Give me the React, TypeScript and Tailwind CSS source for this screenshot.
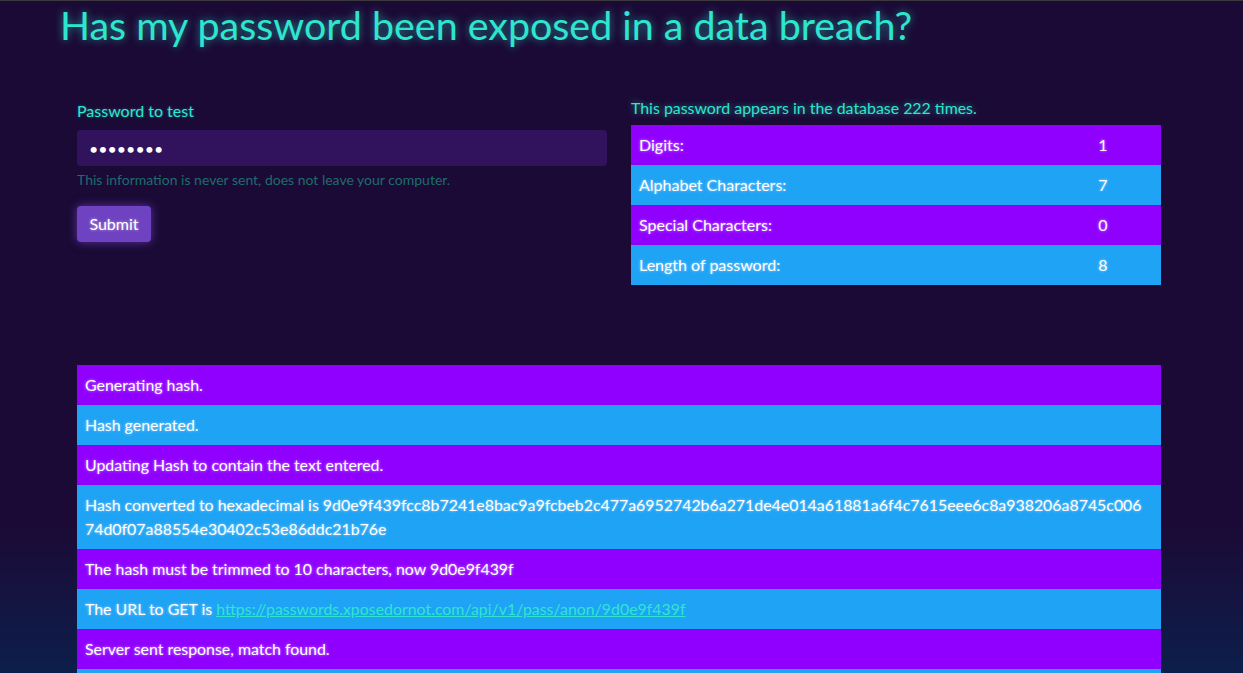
import React from "react";

const stats = [
  ["Digits:", "1"],
  ["Alphabet Characters:", "7"],
  ["Special Characters:", "0"],
  ["Length of password:", "8"],
];

const glowWhite = "[text-shadow:0_0_3px_rgba(255,255,255,0.6)]";

export default function App() {
  return (
    <div
      className="h-[673px] overflow-hidden border-t border-[#3a3a3a] bg-[linear-gradient(to_bottom,#1b0a36_0%,#1b0a36_78%,#0d1e4b_100%)] text-white"
      style={{ fontFamily: "Lato, 'Open Sans', sans-serif" }}
    >
      <div className="ml-[60px] w-[1118px]">
        <h1 className="text-[39.4px] leading-[48px] text-[#2ee6cf] [text-shadow:0_0_8px_rgba(46,230,207,0.6)]">
          Has my password been exposed in a data breach?
        </h1>
        <div className="ml-[17px] mt-[47px] flex w-[1084px] gap-[24px]">
          <div className="w-[530px] pt-[3px]">
            <label className="block text-[16px] leading-[24px] text-[#2ee6cf] [text-shadow:0_0_3px_rgba(46,230,207,0.4)]">
              Password to test
            </label>
            <input
              type="password"
              readOnly
              value="abcdefg1"
              className="mt-[7px] block h-[36px] w-full rounded-[4px] bg-[#31125d] px-[12px] text-[16px] text-white outline-none"
            />
            <div className="mt-[4px] text-[14px] leading-[20px] text-[#1c6d6d]">
              This information is never sent, does not leave your computer.
            </div>
            <button className={`mt-[16px] h-[36px] w-[74px] rounded-[4px] bg-[#6f42c1] text-[16px] text-white shadow-[0_0_10px_rgba(130,80,230,0.6)] ${glowWhite}`}>
              Submit
            </button>
          </div>
          <div className="w-[530px]">
            <div className="text-[15.9px] leading-[24px] text-[#2ee6cf] [text-shadow:0_0_6px_rgba(46,230,207,0.6)]">
              This password appears in the database 222 times.
            </div>
            <div className="mt-[5px]">
              {stats.map(([k, v], i) => (
                <div
                  key={k}
                  className={`flex h-[40px] items-center text-[16px] ${glowWhite} ${i % 2 === 0 ? "bg-[#9000ff]" : "bg-[#1ea3f5]"}`}
                >
                  <div className="flex-1 pl-[8px]">{k}</div>
                  <div className="w-[116px] text-center">{v}</div>
                </div>
              ))}
            </div>
          </div>
        </div>
        <div className={`ml-[17px] mt-[80px] w-[1084px] text-[15.9px] leading-[24px] ${glowWhite}`}>
          <div className="bg-[#9000ff] px-[8px] py-[8px]">Generating hash.</div>
          <div className="bg-[#1ea3f5] px-[8px] py-[8px]">Hash generated.</div>
          <div className="bg-[#9000ff] px-[8px] py-[8px]">Updating Hash to contain the text entered.</div>
          <div className="bg-[#1ea3f5] px-[8px] py-[8px]">
            Hash converted to hexadecimal is 9d0e9f439fcc8b7241e8bac9a9fcbeb2c477a6952742b6a271de4e014a61881a6f4c7615eee6c8a938206a8745c006
            <br />
            74d0f07a88554e30402c53e86ddc21b76e
          </div>
          <div className="bg-[#9000ff] px-[8px] py-[8px]">The hash must be trimmed to 10 characters, now 9d0e9f439f</div>
          <div className="bg-[#1ea3f5] px-[8px] py-[8px]">
            The URL to GET is{" "}
            <a className="text-[#2ee6cf] underline [text-shadow:none]" href="#">
              https://passwords.xposedornot.com/api/v1/pass/anon/9d0e9f439f
            </a>
          </div>
          <div className="bg-[#9000ff] px-[8px] py-[8px]">Server sent response, match found.</div>
          <div className="h-[40px] bg-[#1ea3f5]" />
        </div>
      </div>
    </div>
  );
}
